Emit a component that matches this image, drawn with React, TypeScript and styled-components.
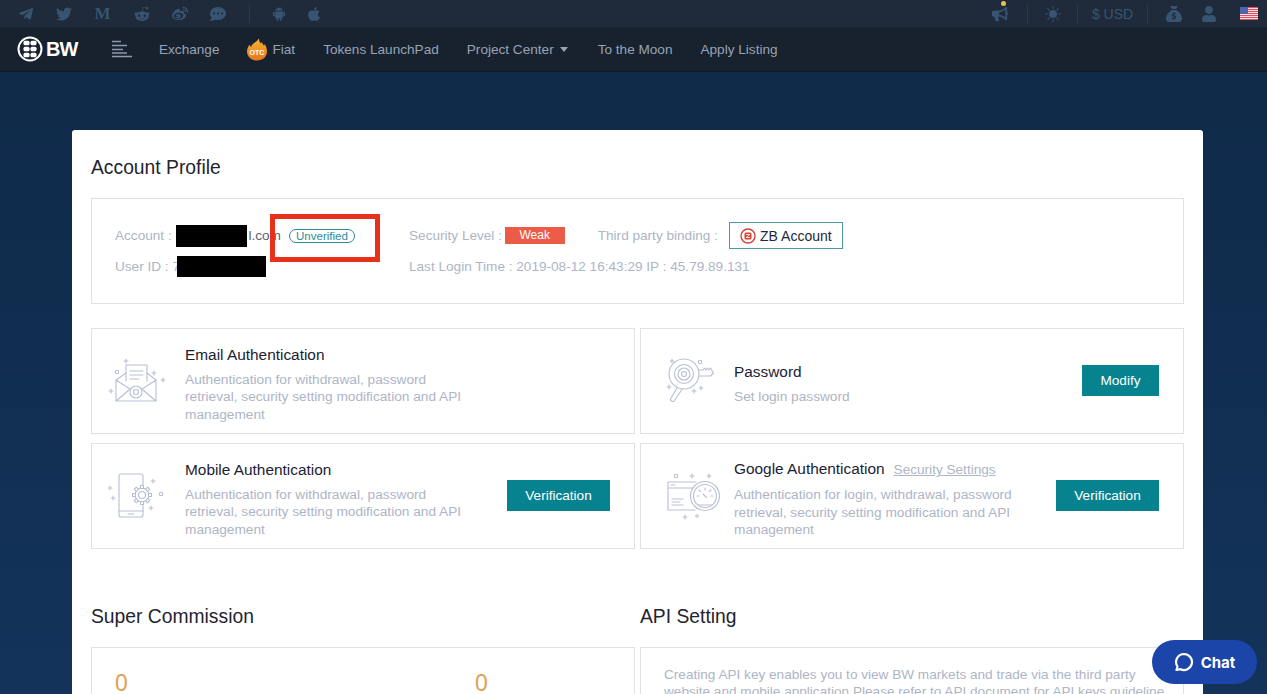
import React from 'react';
import styled, { createGlobalStyle } from 'styled-components';
import { FaTelegramPlane, FaTwitter, FaRedditAlien, FaWeibo, FaCommentDots, FaApple, FaBullhorn, FaUser } from 'react-icons/fa';
import { FaSackDollar } from 'react-icons/fa6';
import { AiFillAndroid } from 'react-icons/ai';
import { BsSunFill } from 'react-icons/bs';

const GlobalStyle = createGlobalStyle`
  html, body {
    margin: 0;
    height: 100%;
    overflow: hidden;
    background: #13335a;
    font-family: "Liberation Sans", Arial, sans-serif;
  }
  * { box-sizing: border-box; }
`;

const Page = styled.div`
  height: 694px;
  overflow: hidden;
  background: linear-gradient(#0f2947, #13335a);
`;

const TopBar = styled.div`
  height: 27px;
  padding: 0 9px 0 7px;
  background: #1f2b3b;
  display: flex;
  align-items: center;
  justify-content: space-between;
  color: #375472;
`;

const IconRow = styled.div`
  display: flex;
  align-items: center;
`;

const Slot = styled.span<{ $w: number }>`
  position: relative;
  width: ${p => p.$w}px;
  display: flex;
  align-items: center;
  justify-content: center;
  font-size: 16px;
`;

const FlagSlot = styled(Slot)`
  justify-content: flex-end;
`;

const MediumGlyph = styled.span`
  font-family: "Liberation Serif", serif;
  font-weight: 700;
  font-size: 17px;
`;

const Divider = styled.span`
  width: 1px;
  height: 18px;
  background: #2c3b4f;
`;

const Dot = styled.span`
  position: absolute;
  top: -5px;
  right: 21px;
  width: 5px;
  height: 5px;
  border-radius: 50%;
  background: #e8c24a;
`;

const Currency = styled.span`
  font-size: 14px;
`;

const NavBar = styled.div`
  height: 45px;
  background: #18222f;
  border-bottom: 1px solid #111a27;
  display: flex;
  align-items: center;
  padding-left: 17px;
`;

const LogoWrap = styled.div`
  width: 95px;
  display: flex;
  align-items: center;
`;

const LogoText = styled.span`
  font-weight: 700;
  font-size: 20px;
  letter-spacing: -1px;
  color: #fff;
  margin-left: 3px;
`;

const MenuLines = styled.svg`
  width: 20px;
  height: 18px;
  margin-right: 27px;
`;

const NavList = styled.nav`
  display: flex;
  align-items: center;
  gap: 28px;
`;

const NavItem = styled.a`
  display: flex;
  align-items: center;
  gap: 5px;
  font-size: 13.6px;
  color: #97a3b3;
`;

const Caret = styled.span`
  width: 0;
  height: 0;
  margin: 0 2px 0 1px;
  border-left: 4px solid transparent;
  border-right: 4px solid transparent;
  border-top: 5px solid #97a3b3;
`;

const Card = styled.main`
  width: 1131px;
  margin: 58px 0 0 72px;
  padding: 26px 19px 40px;
  background: #fff;
  border-radius: 3px;
`;

const Heading = styled.h2`
  margin: 0 0 18px;
  font-size: 19.300px;
  line-height: 24px;
  font-weight: 400;
  color: #1f2430;
`;

const InfoBox = styled.section`
  position: relative;
  height: 106px;
  padding: 21px 23px;
  border: 1px solid #dfe1e6;
  display: grid;
  grid-template-columns: 294px 1fr;
  grid-auto-rows: 31px;
  font-size: 13.6px;
  color: #aeb5c6;
`;

const InfoCell = styled.div`
  display: flex;
  align-items: center;
  white-space: pre;
`;

const Redacted = styled.span<{ $w: number; $h: number; $shift: number }>`
  display: inline-block;
  width: ${p => p.$w}px;
  height: ${p => p.$h}px;
  margin-left: ${p => p.$shift}px;
  background: #000;
`;

const Email = styled.span`
  color: #5a6070;
  margin-left: 1px;
`;

const Unverified = styled.span`
  margin-left: 8px;
  width: 66px;
  height: 14px;
  border: 1px solid #2b8c98;
  border-radius: 8px;
  font-size: 11.5px;
  line-height: 12px;
  text-align: center;
  color: #2b8c98;
`;

const Weak = styled.span`
  width: 60px;
  height: 17px;
  margin-left: -1px;
  background: #ec5b47;
  color: #fff;
  font-size: 12px;
  line-height: 17px;
  text-align: center;
`;

const ThirdParty = styled.span`
  margin-left: 33px;
`;

const ZbButton = styled.span`
  margin-left: 11px;
  width: 114px;
  height: 27px;
  border: 1px solid #4a9aa5;
  display: flex;
  align-items: center;
  justify-content: center;
  gap: 4px;
  font-size: 14px;
  color: #22283a;
`;

const RedFrame = styled.div`
  position: absolute;
  left: 178px;
  top: 15px;
  width: 110px;
  height: 48px;
  border: 5px solid #e8301a;
`;

const AuthGrid = styled.div`
  margin-top: 24px;
  display: grid;
  grid-template-columns: 544px 544px;
  gap: 9px 5px;
`;

const AuthCard = styled.article`
  height: 106px;
  padding: 0 24px 0 14px;
  border: 1px solid #dfe1e6;
  display: flex;
  align-items: center;
`;

const AuthIcon = styled.svg`
  flex: none;
  width: 66px;
  height: 60px;
  margin-right: 13px;
  fill: none;
  stroke: #b7bfd4;
  stroke-width: 1.1;
  stroke-linecap: round;
  stroke-linejoin: round;
`;

const AuthBody = styled.div`
  flex: 1;
  padding-top: 6px;
`;

const AuthTitle = styled.div`
  display: flex;
  align-items: baseline;
  gap: 9px;
  margin-bottom: 6px;
  font-size: 15.400px;
  line-height: 20px;
  color: #1c2233;
`;

const SettingsLink = styled.a`
  font-size: 13.6px;
  color: #aeb5c6;
  text-decoration: underline;
`;

const AuthText = styled.p`
  margin: 0;
  width: 285px;
  font-size: 13.7px;
  line-height: 17.5px;
  color: #aeb5c6;
`;

const ActionButton = styled.button<{ $w: number }>`
  flex: none;
  width: ${p => p.$w}px;
  height: 31px;
  margin-top: -2px;
  border: 0;
  background: #07838f;
  color: #fff;
  font: 13.6px "Liberation Sans", Arial, sans-serif;
`;

const BottomGrid = styled.div`
  margin-top: 56px;
  display: grid;
  grid-template-columns: 544px 544px;
  column-gap: 5px;
`;

const BottomBox = styled.div`
  height: 120px;
  border: 1px solid #dfe1e6;
`;

const CommissionBox = styled(BottomBox)`
  padding: 20px 23px;
  display: grid;
  grid-template-columns: 360px 1fr;
  font-size: 23px;
  line-height: 30px;
  color: #e0a052;
`;

const ApiBox = styled(BottomBox)`
  padding: 18px 12px 18px 23px;
  font-size: 13.6px;
  line-height: 17px;
  color: #aeb5c6;
`;

const ChatButton = styled.button`
  position: fixed;
  left: 1152px;
  top: 640px;
  width: 105px;
  height: 44px;
  border: 0;
  border-radius: 22px;
  background: #1b45a9;
  color: #fff;
  display: flex;
  align-items: center;
  justify-content: center;
  gap: 7px;
  font: 700 15px Inter, "Liberation Sans", sans-serif;
`;

function Logo() {
  const dots = [[-3.5, -6], [3.5, -6], [-3.5, 0], [3.5, 0], [-3.5, 6], [3.5, 6]];
  return (
    <LogoWrap>
      <svg width="26" height="26" viewBox="-13 -13 26 26">
        <circle r="11.5" fill="none" stroke="#fff" strokeWidth="2" />
        {dots.map(([x, y], i) => <rect key={i} x={x - 3} y={y - 2.2} width="6" height="4.4" rx="1.5" fill="#fff" />)}
      </svg>
      <LogoText>BW</LogoText>
    </LogoWrap>
  );
}

function Flame() {
  return (
    <svg width="20" height="23" viewBox="0 0 20 22">
      <defs>
        <linearGradient id="flame" x1="0" y1="0" x2="0" y2="1">
          <stop offset="0" stopColor="#f5b335" />
          <stop offset="1" stopColor="#e8761a" />
        </linearGradient>
      </defs>
      <path d="M12 0c0 3 1 4 2 5 .5-.6.8-1.2 1-2 0 2 1 3 2 4 .5-.5.6-1 .7-1.500C19 8 20 10 20 13c0 5-4 9-10 9S0 18 0 13c0-3 1-5 3-7 0 1 .3 2 1 2.500C5 5 9 4 12 0z" fill="url(#flame)" />
      <text x="10" y="16" textAnchor="middle" fontSize="7" fontWeight="700" fill="#fff" fontFamily="Liberation Sans">OTC</text>
    </svg>
  );
}

function Flag() {
  return (
    <svg width="18" height="13" viewBox="0 0 18 13">
      <rect width="18" height="13" fill="#f6f0f2" />
      {[0, 2, 4, 6, 8, 10].map(y => <rect key={y} y={y} width="18" height="1.100" fill="#e0505c" />)}
      <rect y="12" width="18" height="1" fill="#e0505c" />
      <rect width="8" height="7" fill="#4a66b0" />
    </svg>
  );
}

function ZbIcon() {
  return (
    <svg width="16" height="16" viewBox="0 0 16 16">
      <circle cx="8" cy="8" r="7" fill="none" stroke="#d8402f" strokeWidth="1.4" />
      <rect x="4.500" y="4.500" width="7" height="7" rx="1.5" fill="#d8402f" />
      <path d="M6 6.500h4L6 9.500h4" fill="none" stroke="#fff" strokeWidth="0.8" />
    </svg>
  );
}

function Sparkles({ items }: { items: number[][] }) {
  return (
    <>
      {items.map(([x, y], i) => <path key={i} d={`M${x - 2} ${y}h4M${x} ${y - 2}v4`} />)}
    </>
  );
}

function EmailIcon() {
  return (
    <AuthIcon viewBox="0 0 66 60">
      <path d="M10 29l10-7M41 22l9 7v21H10V29l20 13 20-13M10 50l13-11M50 50L37 39" />
      <path d="M20 30V14h21v16M24 20h13M24 24h13M24 28h9" />
      <circle cx="30" cy="41" r="6" fill="#fff" />
      <circle cx="30" cy="41" r="2.500" />
      <circle cx="11" cy="21" r="1.700" />
      <Sparkles items={[[48, 22], [5, 40], [57, 29], [20, 10]]} />
    </AuthIcon>
  );
}

function PhoneIcon() {
  const teeth = [0, 45, 90, 135, 180, 225, 270, 315];
  return (
    <AuthIcon viewBox="0 0 66 60">
      <rect x="13" y="8" width="24" height="43" rx="2" />
      <path d="M13 45h24M22 48h6" />
      <circle cx="36" cy="29" r="7" fill="#fff" />
      <circle cx="36" cy="29" r="3.500" />
      {teeth.map(a => <rect key={a} x="34.500" y="19.500" width="3" height="3" transform={`rotate(${a} 36 29)`} fill="#fff" />)}
      <circle cx="55" cy="28" r="1.700" />
      <Sparkles items={[[47, 15], [7, 32], [45, 42], [4, 22]]} />
    </AuthIcon>
  );
}

function KeyIcon() {
  return (
    <AuthIcon viewBox="0 0 66 60">
      <path d="M44 19h4l1.500-2 1.500 2 1.500-2 1.500 2 1.500-2 3 5-3 3H43" />
      <circle cx="29" cy="23" r="15" fill="#fff" />
      <circle cx="29" cy="23" r="9.500" />
      <circle cx="29" cy="23" r="6" />
      <circle cx="29" cy="23" r="2.500" />
      <path d="M22 37l-6 10a2 2 0 0 0 3.500 2.500L27 38.500" />
      <circle cx="45" cy="11" r="1.700" />
      <Sparkles items={[[17, 10], [46, 37], [39, 40], [14, 36]]} />
    </AuthIcon>
  );
}

function GaugeIcon() {
  return (
    <AuthIcon viewBox="0 0 66 60">
      <path d="M41 16H13v28h27M13 22h28M16 19h4M17 33h11M17 36h8M17 39h11" />
      <circle cx="50" cy="30" r="14.500" fill="#fff" />
      <circle cx="50" cy="30" r="11.500" />
      <path d="M50 22v2M42 30h2M56 30h2M44 24l1.500 1.500M56 24l-1.500 1.500M43 39h14M48 28l3.500 3.500" />
      <circle cx="21" cy="10" r="1.700" />
      <circle cx="42" cy="50" r="1.200" />
      <Sparkles items={[[37, 10], [54, 10], [30, 51]]} />
    </AuthIcon>
  );
}

export default function App() {
  return (
    <Page>
      <GlobalStyle />
      <TopBar>
        <IconRow>
          <Slot $w={38}><FaTelegramPlane /></Slot>
          <Slot $w={38}><FaTwitter /></Slot>
          <Slot $w={39}><MediumGlyph>M</MediumGlyph></Slot>
          <Slot $w={39}><FaRedditAlien /></Slot>
          <Slot $w={38}><FaWeibo /></Slot>
          <Slot $w={38}><FaCommentDots /></Slot>
          <Slot $w={24}><Divider /></Slot>
          <Slot $w={36}><AiFillAndroid /></Slot>
          <Slot $w={34}><FaApple /></Slot>
        </IconRow>
        <IconRow>
          <Slot $w={54}><FaBullhorn /><Dot /></Slot>
          <Divider />
          <Slot $w={49}><BsSunFill /></Slot>
          <Divider />
          <Slot $w={69}><Currency>$ USD</Currency></Slot>
          <Divider />
          <Slot $w={51}><FaSackDollar /></Slot>
          <Slot $w={20}><FaUser /></Slot>
          <FlagSlot $w={39}><Flag /></FlagSlot>
        </IconRow>
      </TopBar>
      <NavBar>
        <Logo />
        <MenuLines viewBox="0 0 20 18">
          <path d="M0 1.500h9M0 5.500h15M0 9.500h11M0 13h15M0 16.500h20" stroke="#8e99a9" strokeWidth="1.300" />
        </MenuLines>
        <NavList>
          <NavItem>Exchange</NavItem>
          <NavItem><Flame />Fiat</NavItem>
          <NavItem>Tokens LaunchPad</NavItem>
          <NavItem>Project Center<Caret /></NavItem>
          <NavItem>To the Moon</NavItem>
          <NavItem>Apply Listing</NavItem>
        </NavList>
      </NavBar>
      <Card>
        <Heading>Account Profile</Heading>
        <InfoBox>
          <InfoCell>
            Account : <Redacted $w={71} $h={22} $shift={1} /><Email>l.com</Email><Unverified>Unverified</Unverified>
          </InfoCell>
          <InfoCell>
            Security Level : <Weak>Weak</Weak>
            <ThirdParty>Third party binding :</ThirdParty>
            <ZbButton><ZbIcon />ZB Account</ZbButton>
          </InfoCell>
          <InfoCell>User ID : 7<Redacted $w={89} $h={21} $shift={-3} /></InfoCell>
          <InfoCell>Last Login Time : 2019-08-12 16:43:29 IP : 45.79.89.131</InfoCell>
          <RedFrame />
        </InfoBox>
        <AuthGrid>
          <AuthCard>
            <EmailIcon />
            <AuthBody>
              <AuthTitle>Email Authentication</AuthTitle>
              <AuthText>Authentication for withdrawal, password retrieval, security setting modification and API management</AuthText>
            </AuthBody>
          </AuthCard>
          <AuthCard>
            <KeyIcon />
            <AuthBody>
              <AuthTitle>Password</AuthTitle>
              <AuthText>Set login password</AuthText>
            </AuthBody>
            <ActionButton $w={77}>Modify</ActionButton>
          </AuthCard>
          <AuthCard>
            <PhoneIcon />
            <AuthBody>
              <AuthTitle>Mobile Authentication</AuthTitle>
              <AuthText>Authentication for withdrawal, password retrieval, security setting modification and API management</AuthText>
            </AuthBody>
            <ActionButton $w={103}>Verification</ActionButton>
          </AuthCard>
          <AuthCard>
            <GaugeIcon />
            <AuthBody>
              <AuthTitle>Google Authentication <SettingsLink>Security Settings</SettingsLink></AuthTitle>
              <AuthText>Authentication for login, withdrawal, password retrieval, security setting modification and API management</AuthText>
            </AuthBody>
            <ActionButton $w={103}>Verification</ActionButton>
          </AuthCard>
        </AuthGrid>
        <BottomGrid>
          <div>
            <Heading>Super Commission</Heading>
            <CommissionBox><span>0</span><span>0</span></CommissionBox>
          </div>
          <div>
            <Heading>API Setting</Heading>
            <ApiBox>
              Creating API key enables you to view BW markets and trade via the third party website and mobile application Please refer to API document for API keys guideline
            </ApiBox>
          </div>
        </BottomGrid>
      </Card>
      <ChatButton>
        <svg width="20" height="20" viewBox="0 0 20 20" fill="none" stroke="#fff" strokeWidth="2.200">
          <path d="M10 2a8 8 0 1 1-3.500 15.200L2.500 18l1-3.500A8 8 0 0 1 10 2z" strokeLinejoin="round" />
        </svg>
        Chat
      </ChatButton>
    </Page>
  );
}
